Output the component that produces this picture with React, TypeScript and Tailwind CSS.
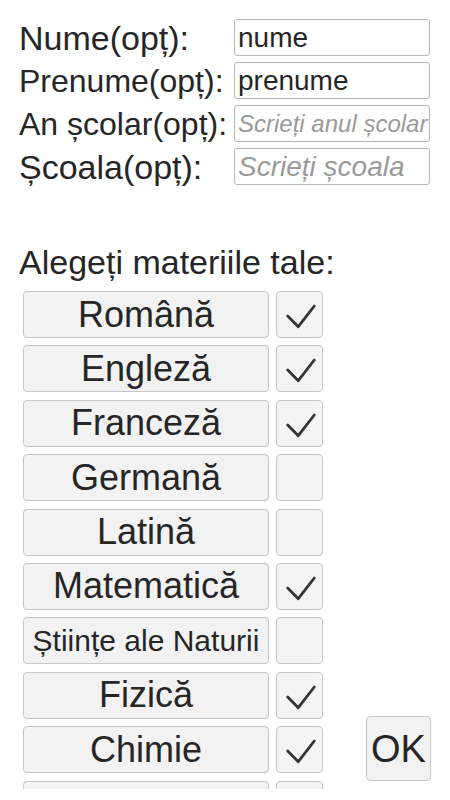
import React from "react";

const font = { fontFamily: '"Liberation Sans", Arial, sans-serif' };

type Field = { label: string; labelSize: string; value?: string; placeholder?: string; phSize?: string };

const fields: Field[] = [
  { label: "Nume(opț):", labelSize: "text-[34px]", value: "nume" },
  { label: "Prenume(opț):", labelSize: "text-[32px]", value: "prenume" },
  { label: "An școlar(opț):", labelSize: "text-[32px]", placeholder: "Scrieți anul școlar", phSize: "text-[24px]" },
  { label: "Școala(opț):", labelSize: "text-[34px]", placeholder: "Scrieți școala", phSize: "text-[28px]" },
];

// ultimul rand e taiat de marginea listei, doar marginea de sus se vede
const subjects = [
  { name: "Română", on: true },
  { name: "Engleză", on: true },
  { name: "Franceză", on: true },
  { name: "Germană", on: false },
  { name: "Latină", on: false },
  { name: "Matematică", on: true },
  { name: "Științe ale Naturii", on: false, small: true },
  { name: "Fizică", on: true },
  { name: "Chimie", on: true },
  { name: "", on: false },
];

function Check() {
  return (
    <svg width="47" height="47" viewBox="0 0 47 47" className="block">
      <polyline points="10.7,24 21.3,34.7 37.3,14" fill="none" stroke="#333" strokeWidth="2.8" strokeLinecap="round" strokeLinejoin="round" />
    </svg>
  );
}

export default function App() {
  return (
    <div className="w-[450px] h-[800px] bg-white text-[#262626] overflow-hidden" style={font}>
      {/* campuri optionale */}
      <div className="flex flex-col gap-[6px] pt-[19px] pl-[19px]">
        {fields.map((f) => (
          <div key={f.label} className="flex items-center h-[37px]">
            <div className={`w-[215px] whitespace-nowrap leading-none ${f.labelSize}`}>{f.label}</div>
            <div className="w-[196px] h-[37px] border border-[#b8b8b8] rounded-[3px] bg-white flex items-center pl-[3px] overflow-hidden whitespace-nowrap">
              {f.value ? (
                <span className="text-[28px] leading-none text-[#262626]">{f.value}</span>
              ) : (
                <span className={`${f.phSize} italic leading-none text-[#9a9a9a]`}>{f.placeholder}</span>
              )}
            </div>
          </div>
        ))}
      </div>

      <div className="mt-[57px] pl-[19px] text-[34px] leading-[40px]">Alegeți materiile tale:</div>

      <div className="flex mt-[9px] pl-[23px]">
        {/* lista materii */}
        <div className="h-[498px] overflow-hidden flex flex-col gap-[7.4px]">
          {subjects.map((s, i) => (
            <div key={i} className="flex gap-[7px] shrink-0">
              <div
                className={`w-[246px] h-[47px] shrink-0 rounded-[4px] border border-[#c6c6c6] bg-[#f2f2f2] flex items-center justify-center whitespace-nowrap leading-none ${
                  s.small ? "text-[30px]" : "text-[36px]"
                }`}
              >
                {s.name}
              </div>
              <div className="w-[47px] h-[47px] shrink-0 rounded-[4px] border border-[#c6c6c6] bg-[#f4f4f4]">
                {s.on && <Check />}
              </div>
            </div>
          ))}
        </div>
        <div className="self-end mb-[8px] ml-[43px] w-[65px] h-[65px] rounded-[4px] border border-[#c6c6c6] bg-[#f2f2f2] flex items-center justify-center text-[38px] leading-none">
          OK
        </div>
      </div>
    </div>
  );
}
